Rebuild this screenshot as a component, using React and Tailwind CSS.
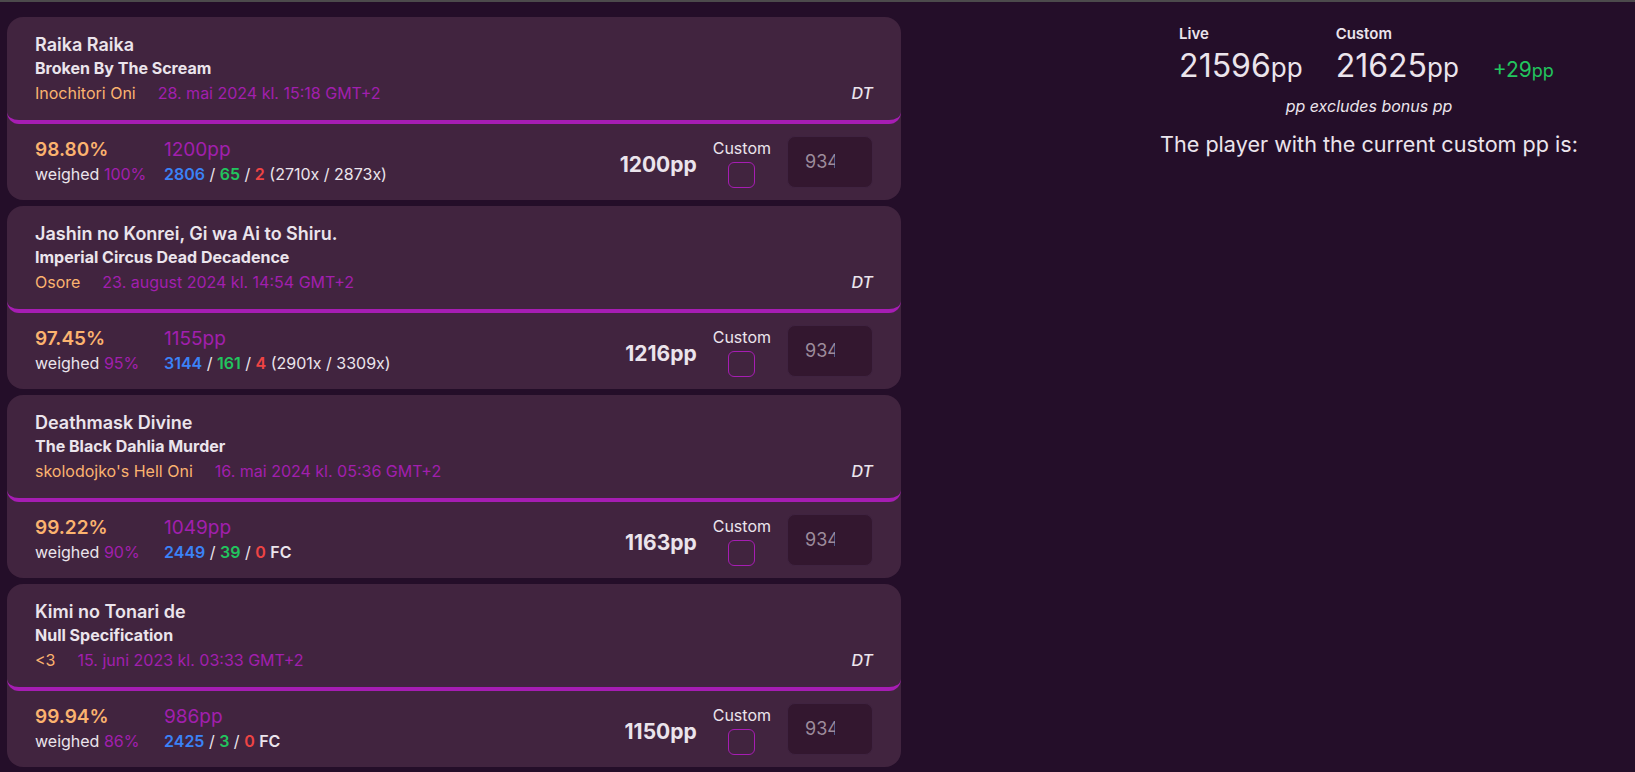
import React from "react";

const scores = [
  {
    title: "Raika Raika",
    artist: "Broken By The Scream",
    diff: "Inochitori Oni",
    date: "28. mai 2024 kl. 15:18 GMT+2",
    acc: "98.80%",
    weight: "100%",
    pp: "1200pp",
    n300: "2806",
    n100: "65",
    miss: "2",
    combo: "(2710x / 2873x)",
    custom: "1200pp",
  },
  {
    title: "Jashin no Konrei, Gi wa Ai to Shiru.",
    artist: "Imperial Circus Dead Decadence",
    diff: "Osore",
    date: "23. august 2024 kl. 14:54 GMT+2",
    acc: "97.45%",
    weight: "95%",
    pp: "1155pp",
    n300: "3144",
    n100: "161",
    miss: "4",
    combo: "(2901x / 3309x)",
    custom: "1216pp",
  },
  {
    title: "Deathmask Divine",
    artist: "The Black Dahlia Murder",
    diff: "skolodojko's Hell Oni",
    date: "16. mai 2024 kl. 05:36 GMT+2",
    acc: "99.22%",
    weight: "90%",
    pp: "1049pp",
    n300: "2449",
    n100: "39",
    miss: "0",
    combo: null,
    custom: "1163pp",
  },
  {
    title: "Kimi no Tonari de",
    artist: "Null Specification",
    diff: "<3",
    date: "15. juni 2023 kl. 03:33 GMT+2",
    acc: "99.94%",
    weight: "86%",
    pp: "986pp",
    n300: "2425",
    n100: "3",
    miss: "0",
    combo: null,
    custom: "1150pp",
  },
];

function ScoreCard({ s }) {
  return (
    <div className="rounded-2xl bg-[#41243f] text-[#ebe4ec]">
      <div className="h-[107px] rounded-b-xl border-b-4 border-[#a61db3] px-7 pt-[15px]">
        <div className="text-lg font-semibold leading-[26px]">{s.title}</div>
        <div className="text-base font-bold leading-5">{s.artist}</div>
        <div className="mt-[3px] flex items-center justify-between text-base leading-6">
          <div className="flex items-center">
            <span className="text-[#fbb36f]">{s.diff}</span>
            <span className="ml-[22px] text-[#a11fae]">{s.date}</span>
          </div>
          <span className="font-medium italic">DT</span>
        </div>
      </div>
      <div className="flex h-[76px] items-center px-7">
        <div className="w-[129px] shrink-0">
          <div className="text-[19px] font-semibold leading-6 text-[#fbb36f]">{s.acc}</div>
          <div className="text-base leading-6">
            weighed <span className="text-[#a11fae]">{s.weight}</span>
          </div>
        </div>
        <div>
          <div className="text-[19px] leading-6 text-[#a11fae]">{s.pp}</div>
          <div className="text-base leading-6">
            <span className="font-semibold text-[#3b82f6]">{s.n300}</span>
            {" / "}
            <span className="font-semibold text-[#22c55e]">{s.n100}</span>
            {" / "}
            <span className="font-semibold text-[#ef4444]">{s.miss}</span>{" "}
            {s.combo ? <span>{s.combo}</span> : <span className="font-semibold">FC</span>}
          </div>
        </div>
        <div className="ml-auto pt-[5px] text-[21px] font-bold">{s.custom}</div>
        <div className="ml-4 flex flex-col items-center">
          <div className="text-base leading-6">Custom</div>
          <div className="mt-[2px] h-[26px] w-[27px] rounded-md border border-[#a61db3]"></div>
        </div>
        <div className="ml-4 flex h-[52px] w-[86px] items-center rounded-lg border border-[#3f2340] bg-[#33172f] pl-[17px]">
          <div className="w-[30px] overflow-hidden whitespace-nowrap text-lg text-[#9d8c9c]">934.5</div>
        </div>
      </div>
    </div>
  );
}

export default function App() {
  return (
    <div
      className="flex h-[772px] w-[1635px] flex-col overflow-hidden bg-[#240e29]"
      style={{ fontFamily: "Inter, 'Noto Sans', sans-serif" }}
    >
      <div className="h-[2px] shrink-0 bg-[#4c4a4c]"></div>
      <div className="flex flex-1 pt-[15px]">
        <div className="ml-[7px] flex w-[894px] shrink-0 flex-col gap-[6px]">
          {scores.map((s, i) => (
            <ScoreCard key={i} s={s} />
          ))}
        </div>
        <div className="flex flex-1 flex-col items-center pl-[202px] text-[#ebe4ec]">
          <div className="mr-[5px] flex items-end gap-[33px] pt-[7px]">
            <div>
              <div className="text-[15px] font-semibold leading-5">Live</div>
              <div className="leading-[44px]">
                <span className="text-[32px]">21596</span>
                <span className="text-[26px]">pp</span>
              </div>
            </div>
            <div>
              <div className="text-[15px] font-semibold leading-5">Custom</div>
              <div className="leading-[44px]">
                <span className="text-[32px]">21625</span>
                <span className="text-[26px]">pp</span>
              </div>
            </div>
            <div className="ml-[1px] leading-[44px] text-[#22c55e]">
              <span className="text-[21px]">+29</span>
              <span className="text-[18px]">pp</span>
            </div>
          </div>
          <div className="mt-[1px] text-base italic leading-6">pp excludes bonus pp</div>
          <div className="mt-[10px] text-[21.6px] leading-8">The player with the current custom pp is:</div>
        </div>
      </div>
    </div>
  );
}
